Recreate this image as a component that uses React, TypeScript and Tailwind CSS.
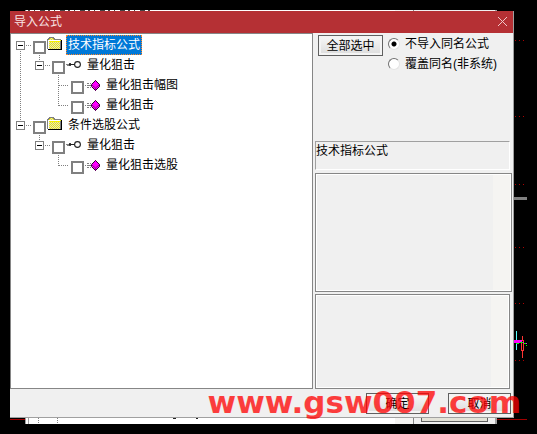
import type { ReactNode } from "react";

type IconName = "folder" | "key" | "formula";
type Guide = "blank" | "line" | "first" | "last" | "child" | "tee" | "elbow";

type TreeRow = {
    id: string;
    label: string;
    icon: IconName;
    guides: Guide[];
    selected?: boolean;
};

const rows: TreeRow[] = [
    { id: "tech", label: "技术指标公式", icon: "folder", guides: ["first"], selected: true },
    { id: "tech-group", label: "量化狙击", icon: "key", guides: ["line", "child"] },
    { id: "tech-chart", label: "量化狙击幅图", icon: "formula", guides: ["line", "blank", "tee"] },
    { id: "tech-main", label: "量化狙击", icon: "formula", guides: ["line", "blank", "elbow"] },
    { id: "pick", label: "条件选股公式", icon: "folder", guides: ["last"] },
    { id: "pick-group", label: "量化狙击", icon: "key", guides: ["blank", "child"] },
    { id: "pick-main", label: "量化狙击选股", icon: "formula", guides: ["blank", "blank", "elbow"] },
];

// Dotted connector lines, one cell per tree level
function GuideCell({ kind, end }: { kind: Guide; end: boolean }) {
    const expander = kind === "first" || kind === "last" || kind === "child";
    const leaf = kind === "tee" || kind === "elbow";
    return (
        <svg
            className={end ? "w-[22px] h-5 shrink-0" : "w-[19px] h-5 shrink-0"}
            viewBox={end ? "0 0 22 20" : "0 0 19 20"}
            fill="none"
            stroke="#808080"
            shapeRendering="crispEdges"
            aria-hidden="true"
        >
            {(kind === "line" || kind === "tee") && <path d="M9.5 0V20" strokeDasharray="1 1" />}
            {(kind === "last" || kind === "child") && <path d="M9.5 0V6" strokeDasharray="1 1" />}
            {kind === "first" && <path d="M9.5 16V20" strokeDasharray="1 1" />}
            {kind === "elbow" && <path d="M9.5 0V11" strokeDasharray="1 1" />}
            {leaf && <path d="M10 10.5H20" strokeDasharray="1 1" />}
            {expander && (
                <>
                    <path d="M15 10.5H21" strokeDasharray="1 1" />
                    <rect x="5.5" y="6.5" width="8" height="8" fill="#fff" />
                    <path d="M7 10.5H12" stroke="#000" />
                </>
            )}
        </svg>
    );
}

function TreeIcon({ name }: { name: IconName }) {
    return (
        <svg className="w-4 h-5 shrink-0" viewBox="0 0 16 20" fill="none" shapeRendering="crispEdges" aria-hidden="true">
            {name === "folder" && (
                <>
                    <path d="M1 4H2V3H7V4H8V5H14V15H1Z" fill="#f4f000" />
                    <path
                        d="M2 7.500H13M2 9.500H13M2 11.500H13M2 13.500H13M3 4.500H7"
                        stroke="#d8d8d8"
                        strokeDasharray="1 1"
                    />
                    <path d="M3 8.500H13M3 10.500H13M3 12.500H13M2 3.500H7" stroke="#d8d8d8" strokeDasharray="1 1" />
                    <path d="M.5 14V4.500H1.500V3.500H2.500V2.500H6.500V3.500H7.500V4.500H13.500" stroke="#808080" />
                    <path d="M1.500 14V5.500H13" stroke="#fff" />
                    <path d="M1 14.500H14.500V5" stroke="#000" />
                    <path d="M13.500 6V14" stroke="#808080" />
                </>
            )}
            {name === "key" && (
                <>
                    <path d="M0 9.500H4M1 10.500H3" stroke="#808080" />
                    <path d="M3 9.500H9" stroke="#222" />
                    <path d="M3 8.500H5M3 10.500H5" stroke="#444" />
                    <circle cx="11.500" cy="9.500" r="2.900" fill="#fff" stroke="#222" strokeWidth="1.100" shapeRendering="auto" />
                </>
            )}
            {name === "formula" && (
                <>
                    <path d="M2 8.500H6M2 12.500H6" stroke="#808080" strokeDasharray="2 1" />
                    <path d="M0 10.500H6" stroke="#808080" strokeDasharray="1 1 4" />
                    <path d="M10.500 5L14.500 9V12L10.500 16L6.500 12V9Z" fill="#f0f" />
                    <path
                        d="M10.500 5.500L14.500 9.500V11.500L10.500 15.500L6.500 11.500V9.500Z"
                        stroke="#300030"
                        shapeRendering="auto"
                    />
                    <path d="M7 10L10.500 13L14 10M10.500 13V15" stroke="#900090" shapeRendering="auto" />
                </>
            )}
        </svg>
    );
}

function PushButton({ children, className = "" }: { children: ReactNode; className?: string }) {
    return (
        <button
            type="button"
            className={`h-[21px] shrink-0 border border-[#606060] bg-linear-to-b from-[#f8f8f8] to-[#dcdcdc] ring-2 ring-inset ring-[#f4f4f4] leading-4 ${className}`}
        >
            {children}
        </button>
    );
}

function RadioOption({ label, checked = false }: { label: string; checked?: boolean }) {
    return (
        <label className="flex h-5 items-center gap-[5px] whitespace-nowrap">
            <input
                type="radio"
                name="conflict"
                defaultChecked={checked}
                className="size-3 shrink-0 appearance-none rounded-full border border-t-[#707070] border-l-[#707070] border-r-[#e4e4e4] border-b-[#e4e4e4] bg-white checked:bg-[radial-gradient(circle,#000_2px,#fff_3px)]"
            />
            {label}
        </label>
    );
}

function TextPane({ label, className }: { label: string; className: string }) {
    return (
        <div className={`flex border border-[#868686] bg-white p-px ${className}`}>
            <textarea readOnly aria-label={label} className="min-w-0 flex-1 resize-none bg-[#f0f0f0] outline-none" />
            <div className="w-[17px] bg-[#f5f4f2]" />
        </div>
    );
}

// Part of the parent window that shows around the dialog
function ParentWindow() {
    return (
        <div className="absolute top-[10px] right-10 bottom-[10px] left-[25px] flex border-r-2 border-l border-[#a0a0a0] bg-white">
            <svg className="absolute top-0 left-0 h-px w-44" viewBox="0 0 176 1" stroke="#444" aria-hidden="true">
                <path d="M2 .5H124" strokeDasharray="2 4 1 5 5 3" />
            </svg>
            <svg
                className="absolute bottom-0 left-0 h-[6px] w-44"
                viewBox="0 0 176 6"
                stroke="#808080"
                shapeRendering="crispEdges"
                aria-hidden="true"
            >
                <path d="M12.500 0V6M31.500 0V6" strokeDasharray="1 1" />
                <path d="M147 .5H150M170 .5H172" stroke="#222" />
            </svg>
            <div className="ml-0.5 flex-1 border-l border-[#a0a0a0]" />
            <div className="w-[18px] bg-[#f5f4f2]" />
            <div className="flex w-[82px] items-end border-l border-[#868686] bg-[#f0f0f0] px-[7px] pb-0.5">
                <div className="h-5 flex-1 border border-[#606060] bg-[#e4e3d8]" />
            </div>
        </div>
    );
}

function ChartEdge() {
    return (
        <svg className="absolute top-0 right-0 h-[434px] w-6" viewBox="0 0 24 434" fill="none" shapeRendering="crispEdges" aria-hidden="true">
            <path d="M2 40.500H12M2 116.500H12M2 184.500H12M2 247.500H12M2 303.500H12M2 360.500H12" stroke="#b00000" strokeDasharray="1 3" />
            <path d="M1 198.500H14" stroke="#808080" strokeWidth="3" />
            <path d="M3.500 331V350" stroke="#5ff" />
            <path d="M9.500 336V340M9.500 351V358" stroke="#f33" />
            <rect x="8.500" y="340.500" width="2" height="10" stroke="#f33" />
            <path d="M1 341.500H9" stroke="#f0f" strokeWidth="3" />
            <path d="M9 342.500H11M12 343.500H14" stroke="#f0f" />
            <path d="M3 343.500H6M7 342.500H10M11 343.500H13M13 345.500H14" stroke="#0f0" />
        </svg>
    );
}

export default function App() {
    return (
        <main className="relative flex min-h-screen flex-col overflow-hidden bg-black pt-[11px] pr-[23px] pb-4 pl-[10px] font-['Liberation_Sans','Noto_Sans_CJK_SC',sans-serif] text-xs text-black">
            <div className="absolute right-[10px] bottom-[14px] left-[10px] h-px bg-[#a00000]" />
            <ParentWindow />
            <ChartEdge />

            <section className="relative flex flex-1 flex-col border-r border-b border-[#a0a0a0] bg-[#f0f0f0]">
                <header className="flex h-[22px] items-center justify-between bg-[#b53034] px-1 text-[#f8e4e4]">
                    <h1>导入公式</h1>
                    <button type="button" aria-label="关闭" className="size-3">
                        <svg viewBox="0 0 12 12" fill="none" stroke="#f0c8c8" aria-hidden="true">
                            <path d="M1 1L10 10M10 1L1 10" />
                        </svg>
                    </button>
                </header>

                <div className="flex flex-1 gap-0.5">
                    {/* Formula tree */}
                    <ul className="min-w-0 flex-1 border border-[#868686] bg-white pt-px">
                        {rows.map((row) => (
                            <li key={row.id} className="flex h-5 items-center">
                                {row.guides.map((kind, i) => (
                                    <GuideCell key={i} kind={kind} end={i === row.guides.length - 1} />
                                ))}
                                <input
                                    type="checkbox"
                                    id={row.id}
                                    className="mt-1 mr-px size-[13px] shrink-0 appearance-none border-2 border-[#808080] bg-white checked:bg-[#808080]"
                                />
                                <TreeIcon name={row.icon} />
                                <label
                                    htmlFor={row.id}
                                    className={`ml-[3px] h-5 border px-px leading-[18px] whitespace-nowrap ${row.selected ? "border-dotted border-[#ff8728] bg-[#0078d7] text-white" : "border-transparent"}`}
                                >
                                    {row.label}
                                </label>
                            </li>
                        ))}
                    </ul>

                    {/* Import options */}
                    <div className="flex w-[198px] flex-col">
                        <div className="flex h-[108px] items-start gap-[5px] pt-0.5 pl-[3px]">
                            <PushButton className="w-[65px]">全部选中</PushButton>
                            <div className="-mt-px flex flex-col">
                                <RadioOption label="不导入同名公式" checked />
                                <RadioOption label="覆盖同名(非系统)" />
                            </div>
                        </div>
                        <p className="mr-[3px] mb-[3px] h-[29px] border border-t-[#a0a0a0] border-r-white border-b-white border-l-[#a0a0a0] leading-[18px]">
                            技术指标公式
                        </p>
                        <TextPane label="公式说明" className="mr-px mb-0.5 h-[119px]" />
                        <TextPane label="公式内容" className="mr-[3px] min-h-[95px] flex-1" />
                    </div>
                </div>

                <footer className="flex h-7 items-start justify-end gap-[19px] pt-1 pr-0.5">
                    <PushButton className="w-[63px]">确定</PushButton>
                    <PushButton className="w-[63px]">取消</PushButton>
                </footer>
            </section>

            <p className="pointer-events-none absolute right-4 bottom-[14px] font-['DejaVu_Sans',sans-serif] text-[31px] leading-9 font-bold text-[#ff0000]/75">
                www.gsw007.com
            </p>
        </main>
    );
}
